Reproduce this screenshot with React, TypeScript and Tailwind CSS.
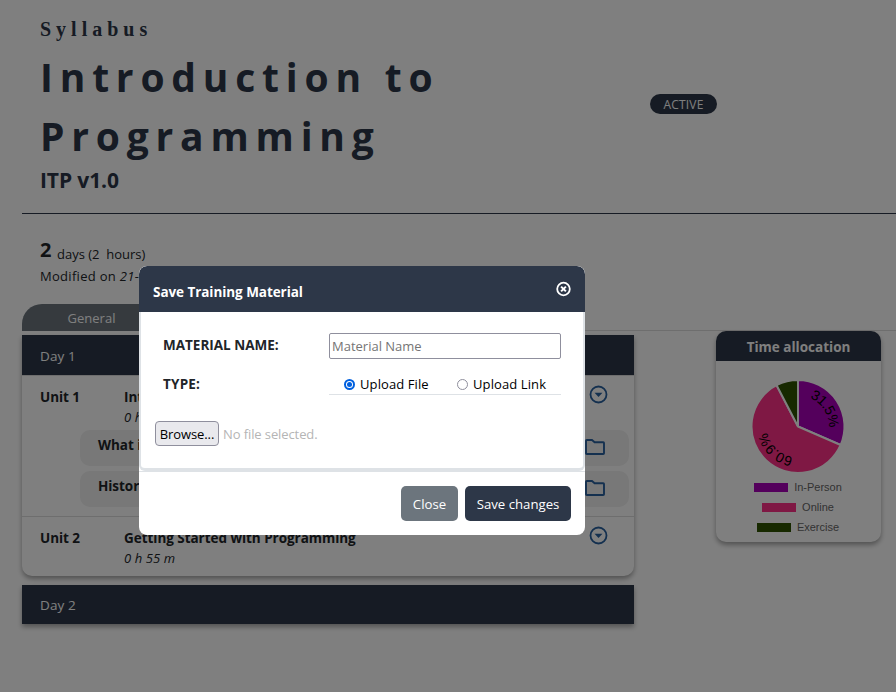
import React from "react";

function ArrowCircle() {
  return (
    <svg width="20" height="20" viewBox="0 0 20 20" className="text-[#28609f]">
      <circle cx="9.500" cy="9.500" r="8" fill="none" stroke="currentColor" strokeWidth="1.800" />
      <path d="M5.500 7.800h8L9.500 12z" fill="currentColor" />
    </svg>
  );
}

function FolderIcon() {
  return (
    <svg width="24" height="24" viewBox="0 0 24 24" className="text-[#28609f]">
      <path
        d="M3 18.200V5.800q0-.8.8-.8H9l2.600 2.200h8.600q.8 0 .8.8v10.200q0 .8-.8.8H3.800q-.8 0-.8-.8z"
        fill="none"
        stroke="currentColor"
        strokeWidth="1.900"
      />
    </svg>
  );
}

function CloseCircle() {
  return (
    <svg width="16" height="16" viewBox="0 0 16 16" fill="none" stroke="white">
      <circle cx="8.500" cy="8" r="6.300" strokeWidth="1.800" />
      <path d="M6.100 5.600l4.800 4.800M10.900 5.600l-4.800 4.800" strokeWidth="2" />
    </svg>
  );
}

function point(deg: number, r: number) {
  const a = (deg * Math.PI) / 180;
  return `${50 + r * Math.sin(a)} ${50.5 - r * Math.cos(a)}`;
}

function slice(from: number, to: number) {
  return `M50 50.5L${point(from, 46.5)}A46.5 46.5 0 ${to - from > 180 ? 1 : 0} 1 ${point(to, 46.5)}Z`;
}

function arc(from: number, to: number, r: number) {
  return `M${point(from, r)}A${r} ${r} 0 0 1 ${point(to, r)}`;
}

function Pie() {
  return (
    <svg width="100" height="101" viewBox="0 0 100 101" className="-ml-px shrink-0">
      <g stroke="white" strokeWidth="2">
        <path d={slice(0, 113.4)} fill="#a800b8" />
        <path d={slice(113.4, 332.6)} fill="#ff3088" />
        <path d={slice(332.6, 360)} fill="#2f5200" />
      </g>
      <path id="arcA" d={arc(0, 114, 31)} fill="none" />
      <path id="arcB" d={arc(165, 283, 31)} fill="none" />
      <g fontSize="14" letterSpacing="-0.5" fontFamily="Liberation Sans, sans-serif" textAnchor="middle">
        <text><textPath href="#arcA" startOffset="50%">31.5%</textPath></text>
        <text><textPath href="#arcB" startOffset="50%">60.9%</textPath></text>
      </g>
    </svg>
  );
}

function Legend({ color, label }: { color: string; label: string }) {
  return (
    <div className="-ml-px flex h-5 items-center justify-center gap-[6px] font-['Liberation_Sans',sans-serif] text-[11px] text-[#666]">
      <span className={`mt-px h-[9px] w-[34px] ${color}`} />
      <span>{label}</span>
    </div>
  );
}

function Unit({ name, title, time, children }: { name: string; title: string; time: string; children?: React.ReactNode }) {
  return (
    <div className="border-t border-[#dcdcdc] pt-[10px]">
      <div className="flex h-[44px] pl-[18px] pr-[25px]">
        <div className="w-[84px] pt-[1px] text-[13.5px] font-bold leading-[20px] tracking-[-0.04px]">{name}</div>
        <div className="flex-1">
          <div className="pt-[1px] text-[13.5px] font-bold leading-[20px] tracking-[-0.04px]">{title}</div>
          <div className="text-[13px] italic leading-[20px] tracking-[0.1px]">{time}</div>
        </div>
        <div className="-mt-[1px]"><ArrowCircle /></div>
      </div>
      {children}
    </div>
  );
}

function Lesson({ title }: { title: string }) {
  return (
    <div className="mb-[5px] ml-[58px] mr-[5px] flex h-[36px] items-start justify-between rounded-[10px] bg-[#f0f0f0] pl-[18px] pr-[22px] pt-[5px] text-[13.5px] font-bold leading-[20px] tracking-[-0.04px]">
      <span>{title}</span>
      <FolderIcon />
    </div>
  );
}

function Page() {
  return (
    <div className="h-[692px] w-[896px] overflow-hidden bg-white">
      <header className="ml-[22px] flex h-[214px] border-b border-[#2d3748] pl-[18px] text-[#2d3748]">
        <div className="w-[610px]">
          <div className="pt-[17px] font-['Liberation_Serif',serif] text-[20px] font-bold leading-[24px] tracking-[5px]">Syllabus</div>
          <h1 className="mt-[6px] text-[39px] font-bold leading-[59px] tracking-[6.8px]">
            Introduction to
            <br />
            Programming
          </h1>
          <div className="mt-px text-[21px] font-bold leading-[28px] tracking-[-0.1px]">ITP v1.0</div>
        </div>
        <div className="mt-[94px] flex h-[20px] w-[67px] items-center justify-center rounded-full bg-[#2d3748] pt-px text-[12px] tracking-[0.2px] text-white">ACTIVE</div>
      </header>
      <div className="h-[90px] pl-[40px] pt-[24px] text-[13px]">
        <div className="flex h-[28px] leading-[24px]">
          <span className="w-[17px] text-[20px] font-bold">2</span>
          <span className="pt-[4px]">days (2&nbsp; hours)</span>
        </div>
        <div className="leading-[20px] tracking-[0.3px]">Modified on <i>21-08-2023</i></div>
      </div>
      <div className="ml-[22px] flex h-[27px] border-b border-[#ddd]">
        <div className="flex h-[27px] w-[139px] items-center justify-center rounded-t-[20px] bg-[#6c757d] pt-[2px] text-[13px] text-white">General</div>
      </div>
      <div className="flex items-start pl-[22px]">
        <div className="mt-[4px] w-[612px]">
          <section className="h-[241px] overflow-visible rounded-b-[10px] shadow-[0_3px_5px_rgba(0,0,0,0.35)]">
            <div className="flex h-[40px] items-center bg-[#2d3748] pl-[18px] pt-[2px] text-[13.5px] tracking-[0.1px] text-white">Day 1</div>
            <Unit name="Unit 1" title="Introduction" time="0 h 50 m">
              <Lesson title="What is Programming" />
              <Lesson title="History of Programming" />
              <div className="h-[4px]" />
            </Unit>
            <Unit name="Unit 2" title="Getting Started with Programming" time="0 h 55 m" />
          </section>
          <section className="mt-[9px] flex h-[39px] items-center bg-[#2d3748] pl-[18px] pt-[2px] text-[13.5px] tracking-[0.1px] text-white shadow-[0_3px_5px_rgba(0,0,0,0.35)]">Day 2</section>
        </div>
        <aside className="ml-[82px] h-[211px] w-[165px] overflow-hidden rounded-[10px] shadow-[0_3px_5px_rgba(0,0,0,0.35)]">
          <div className="flex h-[30px] items-center justify-center bg-[#2d3748] pt-[2px] text-[13.5px] font-bold text-white">Time allocation</div>
          <div className="flex flex-col items-center pt-[15px]">
            <Pie />
            <Legend color="bg-[#a800b8]" label="In-Person" />
            <Legend color="bg-[#ff3088]" label="Online" />
            <Legend color="bg-[#2f5200]" label="Exercise" />
          </div>
        </aside>
      </div>
    </div>
  );
}

function Radio({ checked, label }: { checked?: boolean; label: string }) {
  return (
    <label className="flex items-center gap-[5px]">
      {checked ? (
        <span className="flex size-[11px] items-center justify-center rounded-full border-2 border-[#0060df]">
          <span className="size-[5px] rounded-full bg-[#0060df]" />
        </span>
      ) : (
        <span className="size-[11px] rounded-full border border-[#8f8f9d]" />
      )}
      <span className="tracking-[0.1px]">{label}</span>
    </label>
  );
}

function Modal() {
  return (
    <div className="fixed inset-0 bg-black/50">
      <div className="ml-[139px] mt-[266px] h-[269px] w-[446px] overflow-hidden rounded-[8px] bg-white text-[#212529]">
        <div className="flex h-[46px] items-center justify-between rounded-t-[8px] bg-[#2d3748] pl-[14px] pr-[14px] text-white">
          <span className="pt-[6px] text-[13.5px] font-bold tracking-[-0.06px]">Save Training Material</span>
          <CloseCircle />
        </div>
        <div className="h-[159px] rounded-b-[6px] border-x-2 border-b-[3px] border-[#dee2e6] text-[13px]">
          <div className="flex h-[47px] pl-[22px] pt-[21px]">
            <span className="w-[166px] text-[13.5px] font-bold leading-[24px]">MATERIAL NAME:</span>
            <div className="flex h-[26px] w-[232px] items-center rounded-[2px] border border-[#8f8f9d] pl-[2px] pt-[2px] text-[#757575]">Material Name</div>
          </div>
          <div className="flex h-[36px] pl-[22px]">
            <span className="w-[166px] pt-[13px] text-[13.5px] font-bold leading-[24px] tracking-[0.2px]">TYPE:</span>
            <div className="flex h-[36px] w-[232px] items-center border-b border-[#dee2e6] pl-[15px] pt-[16px] text-black">
              <div className="w-[113px]"><Radio checked label="Upload File" /></div>
              <Radio label="Upload Link" />
            </div>
          </div>
          <div className="flex items-center gap-[4px] pl-[14px] pt-[26px] text-[#b5b5b5]">
            <span className="flex h-[25px] w-[64px] items-center justify-center rounded-[4px] border border-[#8f8f9d] bg-[#e9e9ed] pt-[2px] tracking-[-0.1px] text-black">Browse...</span>
            <span className="pt-[2px] tracking-[-0.1px]">No file selected.</span>
          </div>
        </div>
        <div className="flex h-[64px] justify-end gap-[7px] border-t border-[#dee2e6] pr-[14px] pt-[14px] text-[13.2px] text-white">
          <span className="flex h-[35px] w-[57px] items-center justify-center rounded-[5px] bg-[#6c757d] pt-[2px]">Close</span>
          <span className="flex h-[35px] w-[106px] items-center justify-center rounded-[5px] bg-[#2d3748] pt-[2px]">Save changes</span>
        </div>
      </div>
    </div>
  );
}

export default function App() {
  return (
    <div className="font-['Open_Sans',sans-serif] text-[#212529]">
      <Page />
      <Modal />
    </div>
  );
}
